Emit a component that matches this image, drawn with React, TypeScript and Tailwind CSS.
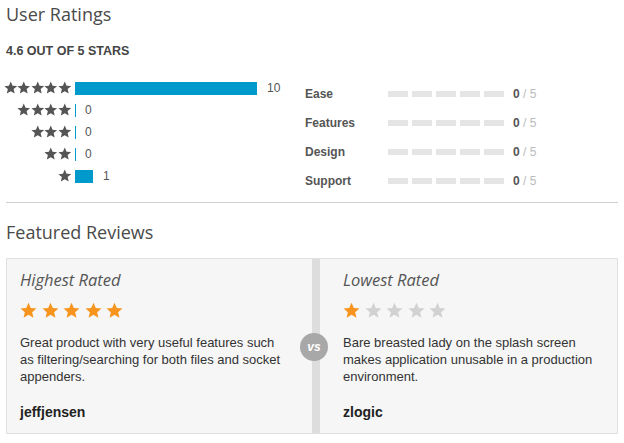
import React from 'react'

const HEAD = { fontFamily: '"Open Sans", "Noto Sans", sans-serif' }
const BODY = { fontFamily: '"Liberation Sans", Arial, sans-serif' }

const starPath =
  'M10 0.8l2.7 6.2 6.7.6-5.1 4.4 1.5 6.6L10 15.1l-5.8 3.5 1.5-6.6L.6 7.6l6.7-.6z'

function Star({ size, color }: { size: number; color: string }) {
  return (
    <svg width={size} height={size} viewBox="0 0 20 20" className="shrink-0">
      <path d={starPath} fill={color} />
    </svg>
  )
}

const dist = [
  { stars: 5, count: 10 },
  { stars: 4, count: 0 },
  { stars: 3, count: 0 },
  { stars: 2, count: 0 },
  { stars: 1, count: 1 },
]

const aspects = ['Ease', 'Features', 'Design', 'Support']

function ReviewPanel({
  title,
  rating,
  text,
  author,
  className,
}: {
  title: string
  rating: number
  text: string
  author: string
  className: string
}) {
  return (
    <div className={`pt-[10px] pb-[12px] ${className}`}>
      <div style={HEAD} className="text-[16.5px] leading-[22px] italic text-[#555]">
        {title}
      </div>
      <div className="flex gap-[4.5px] mt-[11px]">
        {[1, 2, 3, 4, 5].map((i) => (
          <Star key={i} size={17} color={i <= rating ? '#f7941d' : '#d2d2d2'} />
        ))}
      </div>
      <p style={BODY} className="mt-[15px] text-[13px] leading-[17px] text-[#333] h-[51px]">
        {text}
      </p>
      <div style={BODY} className="mt-[18px] text-[14px] font-bold leading-[18px] text-[#222]">
        {author}
      </div>
    </div>
  )
}

export default function App() {
  return (
    <div className="w-[624px] h-[443px] bg-white px-[6px] overflow-hidden">
      <h1 style={HEAD} className="pt-[1px] text-[18px] leading-[26px] text-[#4a4a4a]">
        User Ratings
      </h1>
      <div style={BODY} className="mt-[17px] text-[12.5px] font-bold leading-[15px] text-[#444]">
        4.6 OUT OF 5 STARS
      </div>

      <div className="flex mt-[18px]">
        {/* star distribution */}
        <div className="w-[299px] flex flex-col">
          {dist.map((row) => (
            <div key={row.stars} className="flex items-center h-[22px]">
              <div className="w-[65px] flex justify-end">
                {Array.from({ length: row.stars }).map((_, i) => (
                  <Star key={i} size={13.5} color="#555" />
                ))}
              </div>
              <div className="ml-[4px] flex items-center">
                {row.count > 0 ? (
                  <div
                    className="h-[13px] bg-[#0099cc]"
                    style={{ width: Math.round((row.count / 10) * 182) }}
                  />
                ) : (
                  <div className="h-[13px] w-[1px] bg-[#0099cc]" />
                )}
                <span
                  style={BODY}
                  className={`${row.count > 0 ? 'ml-[10px]' : 'ml-[9px]'} text-[12px] text-[#555]`}
                >
                  {row.count}
                </span>
              </div>
            </div>
          ))}
        </div>

        {/* aspects */}
        <div className="flex flex-col pt-[2px]">
          {aspects.map((a) => (
            <div key={a} className="flex items-center h-[29px]">
              <span style={BODY} className="w-[83px] text-[12px] font-bold text-[#555]">
                {a}
              </span>
              <div className="flex gap-[4px]">
                {[0, 1, 2, 3, 4].map((i) => (
                  <div key={i} className="w-[20px] h-[6px] bg-[#e5e5e5]" />
                ))}
              </div>
              <span style={BODY} className="ml-[9px] text-[12px] text-[#bbb]">
                <span className="font-bold text-[#555]">0</span> / 5
              </span>
            </div>
          ))}
        </div>
      </div>

      <div className="mt-[7px] h-[1px] bg-[#d0d0d0]" />

      <h2 style={HEAD} className="mt-[16px] text-[18px] leading-[26px] text-[#4a4a4a]">
        Featured Reviews
      </h2>

      <div className="relative mt-[13px] flex border border-[#e0e0e0] bg-[#f6f6f6]">
        <ReviewPanel
          title="Highest Rated"
          rating={5}
          className="w-[305px] shrink-0 pl-[13px] pr-[30px]"
          text="Great product with very useful features such as filtering/searching for both files and socket appenders."
          author="jeffjensen"
        />
        <div className="w-[8px] shrink-0 bg-[#dddddd]" />
        <ReviewPanel
          title="Lowest Rated"
          rating={1}
          className="flex-1 pl-[23px] pr-[16px]"
          text="Bare breasted lady on the splash screen makes application unusable in a production environment."
          author="zlogic"
        />
        <div className="absolute left-[293px] top-[74px] w-[28px] h-[28px] rounded-full bg-[#a8a8a8] flex items-center justify-center">
          <span style={BODY} className="text-white text-[12px] font-bold italic leading-none">
            vs
          </span>
        </div>
      </div>
    </div>
  )
}
